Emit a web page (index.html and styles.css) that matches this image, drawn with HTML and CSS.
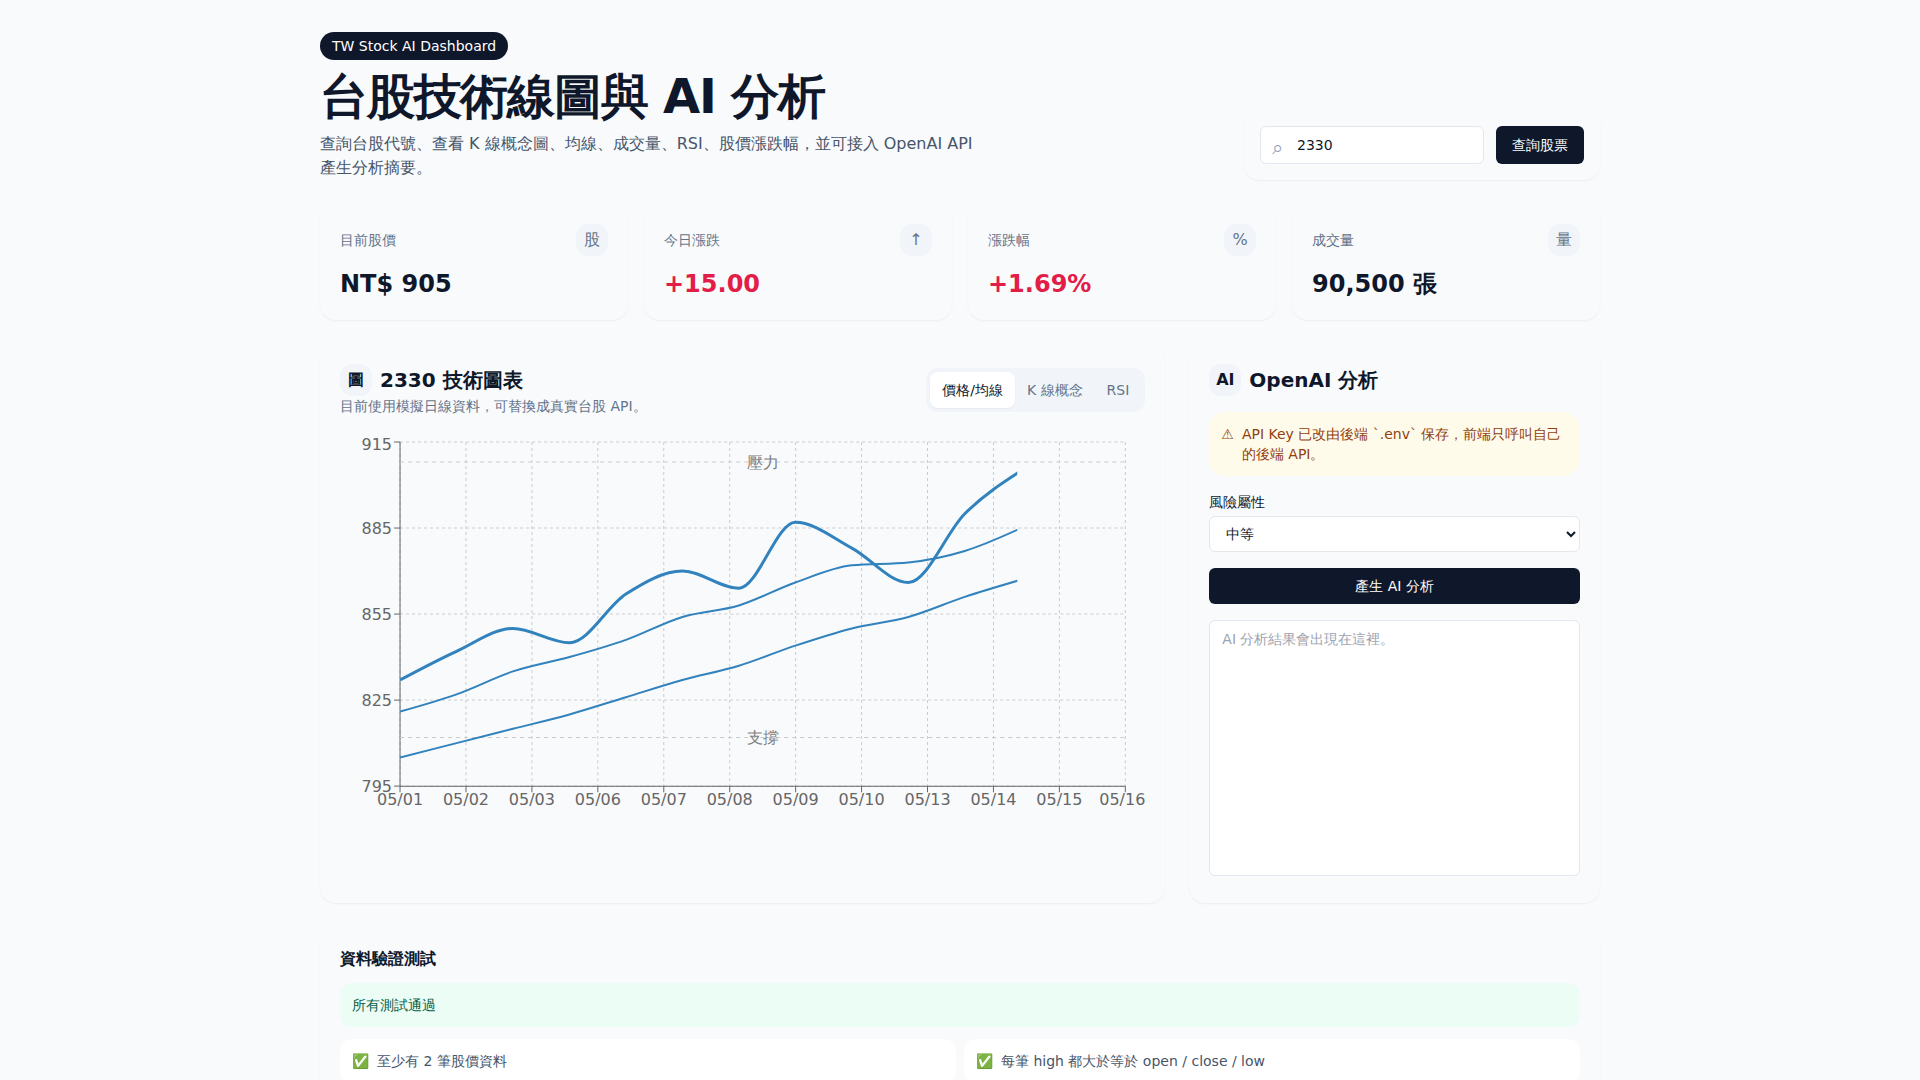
FILE: index.html
```html
<!DOCTYPE html>
<html lang="zh-Hant">
<head>
  <meta charset="utf-8">
  <meta name="viewport" content="width=device-width, initial-scale=1">
  <title>台股技術線圖與 AI 分析</title>
  <link rel="stylesheet" href="styles.css">
</head>
<body>
  <main class="page">
    <header class="header">
      <div class="intro">
        <span class="badge">TW Stock AI Dashboard</span>
        <h1 class="title">台股技術線圖與 AI 分析</h1>
        <p class="lead">查詢台股代號、查看 K 線概念圖、均線、成交量、RSI、股價漲跌幅，並可接入 OpenAI API 產生分析摘要。</p>
      </div>
      <form class="card search">
        <div class="search-field">
          <span class="search-icon" aria-hidden="true">⌕</span>
          <input class="search-input" type="text" value="2330" aria-label="股票代號">
        </div>
        <button class="button" type="button">查詢股票</button>
      </form>
    </header>

    <section class="stats">
      <article class="card">
        <div class="stat-head"><span>目前股價</span><span class="tile">股</span></div>
        <div class="stat-value">NT$ 905</div>
      </article>
      <article class="card">
        <div class="stat-head"><span>今日漲跌</span><span class="tile">↑</span></div>
        <div class="stat-value up">+15.00</div>
      </article>
      <article class="card">
        <div class="stat-head"><span>漲跌幅</span><span class="tile">%</span></div>
        <div class="stat-value up">+1.69%</div>
      </article>
      <article class="card">
        <div class="stat-head"><span>成交量</span><span class="tile">量</span></div>
        <div class="stat-value">90,500 張</div>
      </article>
    </section>

    <section class="panels">
      <article class="card chart-card">
        <div class="chart-head">
          <div>
            <h2 class="panel-title"><span class="tile">圖</span>2330 技術圖表</h2>
            <p class="note">目前使用模擬日線資料，可替換成真實台股 API。</p>
          </div>
          <div class="tabs" role="tablist">
            <button class="tab active" type="button" role="tab" aria-selected="true">價格/均線</button>
            <button class="tab" type="button" role="tab" aria-selected="false">K 線概念</button>
            <button class="tab" type="button" role="tab" aria-selected="false">RSI</button>
          </div>
        </div>
        <svg id="chart" class="chart" viewBox="0 0 805 451" role="img" aria-label="2330 價格與均線">
          <clipPath id="drawn"><rect x="60" y="0" width="617" height="451"/></clipPath>
        </svg>
      </article>

      <article class="card ai-card">
        <h2 class="panel-title"><span class="tile">AI</span>OpenAI 分析</h2>
        <div class="alert"><span>⚠</span><span>API Key 已改由後端 `.env` 保存，前端只呼叫自己的後端 API。</span></div>
        <div class="field">
          <label for="risk">風險屬性</label>
          <select id="risk" class="select">
            <option>保守</option>
            <option selected>中等</option>
            <option>積極</option>
          </select>
        </div>
        <button class="button" type="button">產生 AI 分析</button>
        <textarea class="result" placeholder="AI 分析結果會出現在這裡。" aria-label="AI 分析結果"></textarea>
      </article>
    </section>

    <section class="card">
      <h2 class="tests-title">資料驗證測試</h2>
      <div class="tests-status">所有測試通過</div>
      <ul class="tests">
        <li class="test"><span>✅</span><span>至少有 2 筆股價資料</span></li>
        <li class="test"><span>✅</span><span>每筆 high 都大於等於 open / close / low</span></li>
      </ul>
    </section>
  </main>
  <script src="chart.js"></script>
</body>
</html>
```
FILE: styles.css
```css
*,
*::before,
*::after {
  box-sizing: border-box;
}

body {
  margin: 0;
  background: #f8fafc;
  color: #0f172a;
  font-family: "DejaVu Sans", sans-serif;
  font-size: 16px;
  line-height: 24px;
}

h1,
h2,
p,
ul {
  margin: 0;
  padding: 0;
}

button,
input,
select,
textarea {
  margin: 0;
  font: inherit;
  color: inherit;
}

.page {
  display: flex;
  flex-direction: column;
  gap: 24px;
  max-width: 1328px;
  margin: 0 auto;
  padding: 32px 24px;
}

.card {
  padding: 20px;
  border-radius: 16px;
  background: #f8fafc;
  box-shadow: 0 1px 2px rgba(0, 0, 0, 0.05);
}

.header {
  display: flex;
  flex-wrap: wrap;
  align-items: flex-end;
  justify-content: space-between;
  gap: 16px;
}

.intro {
  display: flex;
  flex-direction: column;
  align-items: flex-start;
  gap: 12px;
  max-width: 672px;
}

.badge {
  padding: 4px 12px;
  border-radius: 14px;
  background: #0f172a;
  color: #fff;
  font-size: 14px;
  line-height: 20px;
}

.title {
  font-size: 48px;
  font-weight: 700;
  line-height: 48px;
  letter-spacing: -0.025em;
}

.lead {
  color: #475569;
}

.search {
  display: flex;
  gap: 12px;
  padding: 16px;
}

.search-field {
  position: relative;
}

.search-icon {
  position: absolute;
  top: 9px;
  left: 12px;
  color: #94a3b8;
  font-size: 20px;
}

.search-input {
  width: 224px;
  height: 38px;
  padding: 8px 12px 8px 36px;
  border: 1px solid #e2e8f0;
  border-radius: 6px;
  background: #fff;
  font-size: 14px;
  line-height: 20px;
}

.button {
  padding: 8px 16px;
  border: 0;
  border-radius: 6px;
  background: #0f172a;
  color: #fff;
  font-size: 14px;
  line-height: 20px;
}

.stats {
  display: grid;
  grid-template-columns: repeat(4, 1fr);
  gap: 16px;
}

.stat-head {
  display: flex;
  align-items: center;
  justify-content: space-between;
  color: #64748b;
  font-size: 14px;
  line-height: 20px;
}

.tile {
  display: flex;
  align-items: center;
  justify-content: center;
  width: 32px;
  height: 32px;
  border-radius: 12px;
  background: #f1f5f9;
  font-size: 16px;
  line-height: 24px;
}

.stat-value {
  margin-top: 12px;
  font-size: 24px;
  font-weight: 700;
  line-height: 32px;
}

.up {
  color: #e11d48;
}

.panels {
  display: grid;
  grid-template-columns: repeat(3, 1fr);
  gap: 24px;
}

.chart-card {
  grid-column: span 2;
}

.chart-head {
  display: flex;
  flex-wrap: wrap;
  align-items: center;
  justify-content: space-between;
  gap: 12px;
  margin-bottom: 16px;
}

.panel-title {
  display: flex;
  align-items: center;
  gap: 8px;
  font-size: 20px;
  font-weight: 700;
  line-height: 28px;
}

.note {
  color: #64748b;
  font-size: 14px;
  line-height: 20px;
}

.tabs {
  display: flex;
  padding: 4px;
  border-radius: 12px;
  background: #f1f5f9;
}

.tab {
  padding: 8px 12px;
  border: 0;
  border-radius: 8px;
  background: transparent;
  color: #64748b;
  font-size: 14px;
  line-height: 20px;
}

.tab.active {
  background: #fff;
  color: #0f172a;
  box-shadow: 0 1px 2px rgba(0, 0, 0, 0.05);
}

.chart {
  display: block;
  width: 100%;
  height: auto;
}

.grid-line {
  stroke: #ccc;
  stroke-dasharray: 3 3;
}

.ref-line {
  stroke: #ccc;
  stroke-dasharray: 4 4;
}

.axis {
  stroke: #666;
}

.tick-label {
  fill: #666;
}

.ref-label {
  fill: #808080;
}

.series {
  fill: none;
  stroke: #3182bd;
  stroke-width: 2;
  clip-path: url(#drawn);
}

.series.price {
  stroke-width: 3;
}

.ai-card {
  display: flex;
  flex-direction: column;
  gap: 16px;
}

.alert {
  display: flex;
  gap: 8px;
  padding: 12px;
  border-radius: 16px;
  background: #fffbeb;
  color: #92400e;
  font-size: 14px;
  line-height: 20px;
}

.field {
  display: flex;
  flex-direction: column;
  gap: 4px;
  font-size: 14px;
  line-height: 20px;
}

.select {
  height: 36px;
  padding: 0 0 0 12px;
  border: 1px solid #e5e7eb;
  border-radius: 6px;
  background: #fff;
}

.result {
  height: 256px;
  padding: 8px 12px;
  border: 1px solid #e2e8f0;
  border-radius: 6px;
  background: #fff;
  font-size: 14px;
  line-height: 20px;
  resize: none;
}

.result::placeholder {
  color: #9ca3af;
}

.tests-title {
  font-size: 16px;
  font-weight: 700;
  line-height: 24px;
}

.tests-status {
  margin: 12px 0;
  padding: 12px;
  border-radius: 12px;
  background: #ecfdf5;
  color: #065f46;
  font-size: 14px;
  line-height: 20px;
}

.tests {
  display: grid;
  grid-template-columns: repeat(2, 1fr);
  gap: 8px;
  list-style: none;
}

.test {
  display: flex;
  gap: 8px;
  padding: 12px;
  border-radius: 12px;
  background: #fff;
  color: #475569;
  font-size: 14px;
  line-height: 20px;
}
```
FILE: chart.js
```js
const plot = { left: 60, right: 785, top: 10, bottom: 354 };
const domain = { min: 795, max: 915 };
const lineWidth = 621;

const days = ["05/01", "05/02", "05/03", "05/06", "05/07", "05/08", "05/09", "05/10", "05/13", "05/14", "05/15", "05/16"];
const price = [832, 842, 850, 845, 862, 870, 864, 887, 878, 866, 890, 905];
const ma5 = [821, 827, 835, 840, 846, 854, 858, 866, 872, 873, 877, 885];
const ma20 = [805, 810, 815, 820, 826, 832, 837, 844, 850, 854, 861, 867];

const svg = document.getElementById("chart");

function add(name, attrs, text) {
  const node = document.createElementNS("http://www.w3.org/2000/svg", name);
  for (const key in attrs) node.setAttribute(key, attrs[key]);
  if (text) node.textContent = text;
  svg.appendChild(node);
}

function line(cls, x1, y1, x2, y2) {
  add("line", { class: cls, x1, y1, x2, y2 });
}

function yOf(value) {
  return plot.bottom - (value - domain.min) / (domain.max - domain.min) * (plot.bottom - plot.top);
}

// Monotone cubic interpolation through evenly spaced points.
function monotone(values) {
  const h = lineWidth / (values.length - 1);
  const ys = values.map(yOf);
  const n = ys.length;
  const s = ys.slice(1).map((y, i) => (y - ys[i]) / h);
  const t = ys.map((_, i) => {
    if (i === 0 || i === n - 1) return 0;
    const a = s[i - 1], b = s[i];
    return (Math.sign(a) + Math.sign(b)) * Math.min(Math.abs(a), Math.abs(b), Math.abs(a + b) / 4);
  });
  t[0] = (3 * s[0] - t[1]) / 2;
  t[n - 1] = (3 * s[n - 2] - t[n - 2]) / 2;
  let d = `M${plot.left},${ys[0]}`;
  for (let i = 1; i < n; i++) {
    const x0 = plot.left + (i - 1) * h;
    const x1 = x0 + h;
    d += `C${x0 + h / 3},${ys[i - 1] + t[i - 1] * h / 3} ${x1 - h / 3},${ys[i] - t[i] * h / 3} ${x1},${ys[i]}`;
  }
  return d;
}

const step = (plot.right - plot.left) / (days.length - 1);
const levels = [795, 825, 855, 885, 915];

levels.forEach(v => line("grid-line", plot.left, yOf(v), plot.right, yOf(v)));
days.forEach((_, i) => line("grid-line", plot.left + i * step, plot.top, plot.left + i * step, plot.bottom));

line("axis", plot.left, plot.bottom, plot.right, plot.bottom);
line("axis", plot.left, plot.top, plot.left, plot.bottom);

days.forEach((day, i) => {
  const x = plot.left + i * step;
  line("axis", x, plot.bottom, x, plot.bottom + 6);
  add("text", { class: "tick-label", x: Math.min(x, 782), y: 373, "text-anchor": "middle" }, day);
});

levels.forEach(v => {
  line("axis", plot.left - 6, yOf(v), plot.left, yOf(v));
  add("text", { class: "tick-label", x: plot.left - 8, y: Math.max(yOf(v) + 6, 18), "text-anchor": "end" }, String(v));
});

[[908, "壓力"], [812, "支撐"]].forEach(([v, label]) => {
  line("ref-line", plot.left, yOf(v), plot.right, yOf(v));
  add("text", { class: "ref-label", x: (plot.left + plot.right) / 2, y: yOf(v) + 6, "text-anchor": "middle" }, label);
});

add("path", { class: "series price", d: monotone(price) });
add("path", { class: "series", d: monotone(ma5) });
add("path", { class: "series", d: monotone(ma20) });
```
